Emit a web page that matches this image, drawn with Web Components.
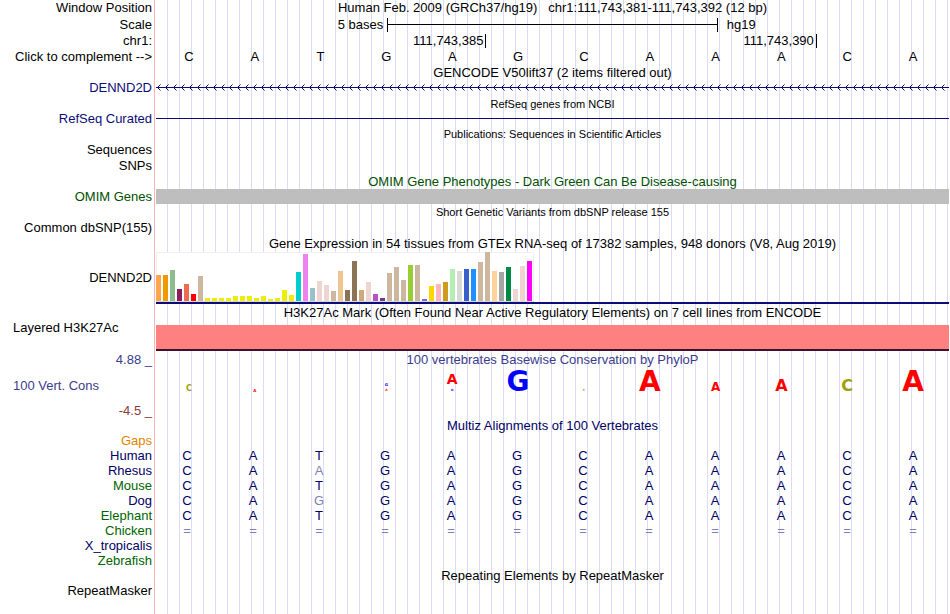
<!DOCTYPE html>
<html lang="en">
<head>
<meta charset="utf-8">
<title>Genome Browser - chr1:111,743,381-111,743,392</title>
<style>
  body {
    margin: 0;
    background: #fff;
    font-family: "Liberation Sans", Arial, Helvetica, sans-serif;
    font-size: 13px;
    line-height: 14px;
    color: #000;
  }
</style>
</head>
<body>

<genome-view>
  <track-row label="Window Position" size="16"><track-title>Human Feb. 2009 (GRCh37/hg19) &nbsp; chr1:111,743,381-111,743,392 (12 bp)</track-title></track-row>
  <track-row label="Scale" size="17"><scale-bar before="5 bases" after="hg19"></scale-bar></track-row>
  <track-row label="chr1:" size="16"><position-ticks values="111,743,385 111,743,390"></position-ticks></track-row>
  <track-row size="16">
    <button slot="label" type="button">Click to complement --&gt;</button>
    <base-row bases="CATGAGCAAACA"></base-row>
  </track-row>

  <track-row size="16"><track-title>GENCODE V50lift37 (2 items filtered out)</track-title></track-row>
  <track-row label="DENND2D" size="14" style="--label: #0c0c78"><gene-line strand="-"></gene-line></track-row>
  <track-row size="17"><track-title small>RefSeq genes from NCBI</track-title></track-row>
  <track-row label="RefSeq Curated" size="14" style="--label: #0c0c78"><gene-line></gene-line></track-row>
  <track-row size="16"><track-title small>Publications: Sequences in Scientific Articles</track-title></track-row>
  <track-row label="Sequences" size="16"></track-row>
  <track-row label="SNPs" size="16"></track-row>

  <track-row size="15"><track-title style="color: #005000">OMIM Gene Phenotypes - Dark Green Can Be Disease-causing</track-title></track-row>
  <track-row label="OMIM Genes" size="15" style="--label: #005000"><solid-band></solid-band></track-row>
  <track-row size="16"><track-title small>Short Genetic Variants from dbSNP release 155</track-title></track-row>
  <track-row label="Common dbSNP(155)" size="16"></track-row>

  <track-row size="16"><track-title>Gene Expression in 54 tissues from GTEx RNA-seq of 17382 samples, 948 donors (V8, Aug 2019)</track-title></track-row>
  <track-row label="DENND2D" size="52"><expression-chart></expression-chart></track-row>

  <track-row label="Layered H3K27Ac" align="left" size="47">
    <track-title>H3K27Ac Mark (Often Found Near Active Regulatory Elements) on 7 cell lines from ENCODE</track-title>
    <solid-band style="--band: #ff8080; --band-height: 26px; --edge: 2px solid #40122e"></solid-band>
  </track-row>

  <track-row label="4.88 _" size="18" style="--label: #3c3c8c"><track-title style="color: #3c3c8c">100 vertebrates Basewise Conservation by PhyloP</track-title></track-row>
  <track-row label="100 Vert. Cons" align="left" size="33" style="--label: #3c3c8c"><sequence-logo></sequence-logo></track-row>
  <track-row label="-4.5 _" size="17" style="--label: #8c3c3c"></track-row>

  <track-row size="14"><track-title style="color: #000064">Multiz Alignments of 100 Vertebrates</track-title></track-row>
  <alignment-table></alignment-table>

  <track-row size="16"><track-title>Repeating Elements by RepeatMasker</track-title></track-row>
  <track-row label="RepeatMasker" size="14"></track-row>
</genome-view>

<script>
  // Full view: pink divider after the labels, guide lines behind the data
  class GenomeView extends HTMLElement {
    constructor() {
      super();
      this.attachShadow({ mode: 'open' });
      this.shadowRoot.innerHTML = `
        <style>
          :host {
            display: flex;
            flex-direction: column;
            box-sizing: border-box;
            min-height: 100vh;
            padding-right: 1px;
            --label-width: 154px;
            background:
              linear-gradient(#ffb4b4, #ffb4b4) 154px 0 / 1px 100% no-repeat,
              repeating-linear-gradient(to right, transparent 0 11px, #dcdcf8 11px 12px) 156px 0 no-repeat;
          }
        </style>
        <slot></slot>
      `;
    }
  }

  class TrackRow extends HTMLElement {
    constructor() {
      super();
      this.attachShadow({ mode: 'open' });
    }

    connectedCallback() {
      const label = this.getAttribute('label') || '';
      const size = this.getAttribute('size') || 15;
      this.shadowRoot.innerHTML = `
        <style>
          :host {
            display: grid;
            grid-template-columns: var(--label-width) minmax(0, 1fr);
            min-height: ${size}px;
          }
          .label {
            display: flex;
            align-items: center;
            justify-content: flex-end;
            padding: 0 2px 0 13px;
            white-space: nowrap;
            color: var(--label, #000);
          }
          :host([align="left"]) .label { justify-content: flex-start; }
          .data {
            display: grid;
            grid-auto-rows: auto;
            align-items: center;
            padding-left: 2px;
          }
          ::slotted(button) {
            border: 0;
            padding: 0;
            background: none;
            font: inherit;
            color: inherit;
            cursor: pointer;
          }
        </style>
        <div class="label"><slot name="label">${label}</slot></div>
        <div class="data"><slot></slot></div>
      `;
    }
  }

  class TrackTitle extends HTMLElement {
    constructor() {
      super();
      this.attachShadow({ mode: 'open' });
      this.shadowRoot.innerHTML = `
        <style>
          :host { display: block; text-align: center; white-space: nowrap; }
          :host([small]) { font-size: 11px; }
        </style>
        <slot></slot>
      `;
    }
  }

  class ScaleBar extends HTMLElement {
    constructor() {
      super();
      this.attachShadow({ mode: 'open' });
    }

    connectedCallback() {
      this.shadowRoot.innerHTML = `
        <style>
          :host { display: grid; grid-template-columns: 7fr 10fr 7fr; align-items: center; }
          .before { text-align: right; padding-right: 4px; }
          .after { padding-left: 9px; }
          .bar {
            display: flex;
            align-items: center;
            height: 14px;
            border: solid #000;
            border-width: 0 1px;
          }
          .bar::before { content: ''; flex: 1; height: 1px; background: #000; }
        </style>
        <span class="before">${this.getAttribute('before')}</span>
        <span class="bar"></span>
        <span class="after">${this.getAttribute('after')}</span>
      `;
    }
  }

  class PositionTicks extends HTMLElement {
    constructor() {
      super();
      this.attachShadow({ mode: 'open' });
    }

    connectedCallback() {
      const values = this.getAttribute('values').split(' ');
      this.shadowRoot.innerHTML = `
        <style>
          :host { display: grid; grid-template-columns: 5fr 5fr 2fr; }
          span {
            text-align: right;
            padding-right: 2px;
            border-right: 1px solid #000;
          }
        </style>
        ${values.map(v => `<span>${v}</span>`).join('')}
      `;
    }
  }

  class BaseRow extends HTMLElement {
    constructor() {
      super();
      this.attachShadow({ mode: 'open' });
    }

    connectedCallback() {
      this.shadowRoot.innerHTML = `
        <style>
          :host {
            display: grid;
            grid-template-columns: repeat(12, minmax(0, 1fr));
            padding-right: 3px;
            text-align: center;
          }
        </style>
        ${[...this.getAttribute('bases')].map(b => `<span>${b}</span>`).join('')}
      `;
    }
  }

  // Gene drawn as a line, with chevrons when it has a strand
  class GeneLine extends HTMLElement {
    constructor() {
      super();
      this.attachShadow({ mode: 'open' });
    }

    connectedCallback() {
      const chevrons = this.getAttribute('strand') === '-'
        ? '<rect width="100%" height="14" fill="url(#chevron)"/>' : '';
      this.shadowRoot.innerHTML = `
        <style>
          :host { display: block; }
          svg { display: block; width: 100%; height: 14px; }
        </style>
        <svg aria-hidden="true">
          <defs>
            <pattern id="chevron" width="8" height="14" patternUnits="userSpaceOnUse">
              <path d="M4.5 3.5 L1.5 6.5 L4.5 9.5" fill="none" stroke="#0c0c78"/>
            </pattern>
          </defs>
          <rect y="6" width="100%" height="1" fill="#0c0c78"/>
          ${chevrons}
        </svg>
      `;
    }
  }

  class SolidBand extends HTMLElement {
    constructor() {
      super();
      this.attachShadow({ mode: 'open' });
      this.shadowRoot.innerHTML = `
        <style>
          :host {
            display: block;
            box-sizing: border-box;
            align-self: end;
            height: var(--band-height, 100%);
            background: var(--band, #bebebe);
            border-bottom: var(--edge, 0);
          }
        </style>
      `;
    }
  }

  // [height, color] for each GTEx tissue
  const TISSUES = [
    [26, '#ffa54f'], [26, '#ee9a00'], [31, '#8fbc8f'], [12, '#8b1c62'], [17, '#ee6a50'], [7, '#ff0000'],
    [25, '#cdb79e'], [3, '#eeee00'], [3, '#eeee00'], [3, '#eeee00'], [3, '#eeee00'], [5, '#eeee00'],
    [5, '#eeee00'], [5, '#eeee00'], [3, '#eeee00'], [5, '#eeee00'], [2, '#eeee00'], [3, '#eeee00'],
    [11, '#eeee00'], [6, '#eeee00'], [29, '#00cdcd'], [47, '#ee82ee'], [13, '#9ac0cd'], [20, '#eed5d2'],
    [16, '#eed5d2'], [10, '#cdb79e'], [30, '#eec591'], [11, '#8b7355'], [40, '#8b7355'], [11, '#cdaa7d'],
    [19, '#eed5d2'], [7, '#b452cd'], [3, '#7a378b'], [28, '#cdb79e'], [34, '#cdb79e'], [21, '#cdb79e'],
    [36, '#9acd32'], [36, '#cdb79e'], [2, '#7a67ee'], [15, '#ffd700'], [17, '#ffb6c1'], [19, '#cd9b1d'],
    [32, '#b4eeb4'], [30, '#d9d9d9'], [32, '#3a5fcd'], [32, '#1e90ff'], [39, '#cdb79e'], [49, '#cdb79e'],
    [30, '#ffd39b'], [29, '#a6a6a6'], [34, '#008b45'], [12, '#eed5d2'], [35, '#eed5d2'], [40, '#ff00ff']
  ];

  class ExpressionChart extends HTMLElement {
    constructor() {
      super();
      this.attachShadow({ mode: 'open' });
      const bars = TISSUES.map(([h, color], i) =>
        `<rect x="${i * 7}" y="${49 - h}" width="5" height="${h}" fill="${color}"/>`).join('');
      this.shadowRoot.innerHTML = `
        <style>
          :host { display: block; border-bottom: 2px solid #0c0c78; }
          svg { display: block; }
        </style>
        <svg width="378" height="50" role="img" aria-label="Expression by tissue">
          <rect width="378" height="50" fill="#fff"/>
          <path d="M0.5 49 V0.5 H377.5 V49" fill="none" stroke="#f0f0f0"/>
          <path d="M0 49.5 H378" stroke="#d8d8d8"/>
          ${bars}
        </svg>
      `;
    }
  }

  // Letters of each column from top to bottom: [letter, line height, font size]
  const LOGO = [
    [['C', 6, 8]],
    [['A', 3, 4]],
    [],
    [['G', 6, 4], ['A', 4, 3]],
    [['A', 18, 14], ['G', 4, 3]],
    [['G', 20, 28]],
    [['C', 3, 3]],
    [['A', 20, 28]],
    [['A', 9, 12]],
    [['A', 12, 16]],
    [['C', 12, 16]],
    [['A', 20, 28]]
  ];

  class SequenceLogo extends HTMLElement {
    constructor() {
      super();
      this.attachShadow({ mode: 'open' });
      const columns = LOGO.map(col => `<div>${col.map(([b, h, size]) =>
        `<span class="${b}" style="font-size: ${size}px; line-height: ${h}px">${b}</span>`).join('')}</div>`).join('');
      this.shadowRoot.innerHTML = `
        <style>
          :host {
            display: grid;
            grid-template-columns: repeat(12, minmax(0, 1fr));
            align-self: stretch;
            padding: 0 3px 10px 0;
            font-family: "DejaVu Sans", Verdana, sans-serif;
            font-weight: bold;
          }
          div { display: flex; flex-direction: column; align-items: center; justify-content: flex-end; }
          .A { color: #ff0000; }
          .C { color: #a0a000; }
          .G { color: #0000ff; }
        </style>
        ${columns}
      `;
    }
  }

  const SPECIES = [
    ['Gaps', '', 'gap'],
    ['Human', 'CATGAGCAAACA', 'odd'],
    ['Rhesus', 'CAAGAGCAAACA', 'odd'],
    ['Mouse', 'CATGAGCAAACA', 'even'],
    ['Dog', 'CAGGAGCAAACA', 'odd'],
    ['Elephant', 'CATGAGCAAACA', 'even'],
    ['Chicken', '============', 'even'],
    ['X_tropicalis', '', 'odd'],
    ['Zebrafish', '', 'even']
  ];

  class AlignmentTable extends HTMLElement {
    constructor() {
      super();
      this.attachShadow({ mode: 'open' });
      const human = SPECIES[1][1];
      const rows = SPECIES.map(([name, bases, tone]) => {
        // bases that differ from human are drawn lighter
        const cells = [...(bases || ' '.repeat(12))].map((b, i) =>
          `<td${b !== human[i] ? ' class="diff"' : ''}>${b.trim()}</td>`).join('');
        return `<tr><th scope="row" class="${tone}">${name}</th>${cells}</tr>`;
      }).join('');
      this.shadowRoot.innerHTML = `
        <style>
          :host { display: block; padding-right: 3px; }
          table { width: 100%; table-layout: fixed; border-collapse: collapse; }
          th, td { height: 15px; padding: 0; font-weight: normal; }
          th { width: 154px; box-sizing: border-box; padding-right: 2px; text-align: right; }
          td { text-align: center; color: #000064; }
          td.diff { color: #8080b4; }
          .gap { color: #e68200; }
          .odd { color: #000064; }
          .even { color: #006400; }
        </style>
        <table><tbody>${rows}</tbody></table>
      `;
    }
  }

  customElements.define('genome-view', GenomeView);
  customElements.define('track-row', TrackRow);
  customElements.define('track-title', TrackTitle);
  customElements.define('scale-bar', ScaleBar);
  customElements.define('position-ticks', PositionTicks);
  customElements.define('base-row', BaseRow);
  customElements.define('gene-line', GeneLine);
  customElements.define('solid-band', SolidBand);
  customElements.define('expression-chart', ExpressionChart);
  customElements.define('sequence-logo', SequenceLogo);
  customElements.define('alignment-table', AlignmentTable);
</script>
</body>
</html>
